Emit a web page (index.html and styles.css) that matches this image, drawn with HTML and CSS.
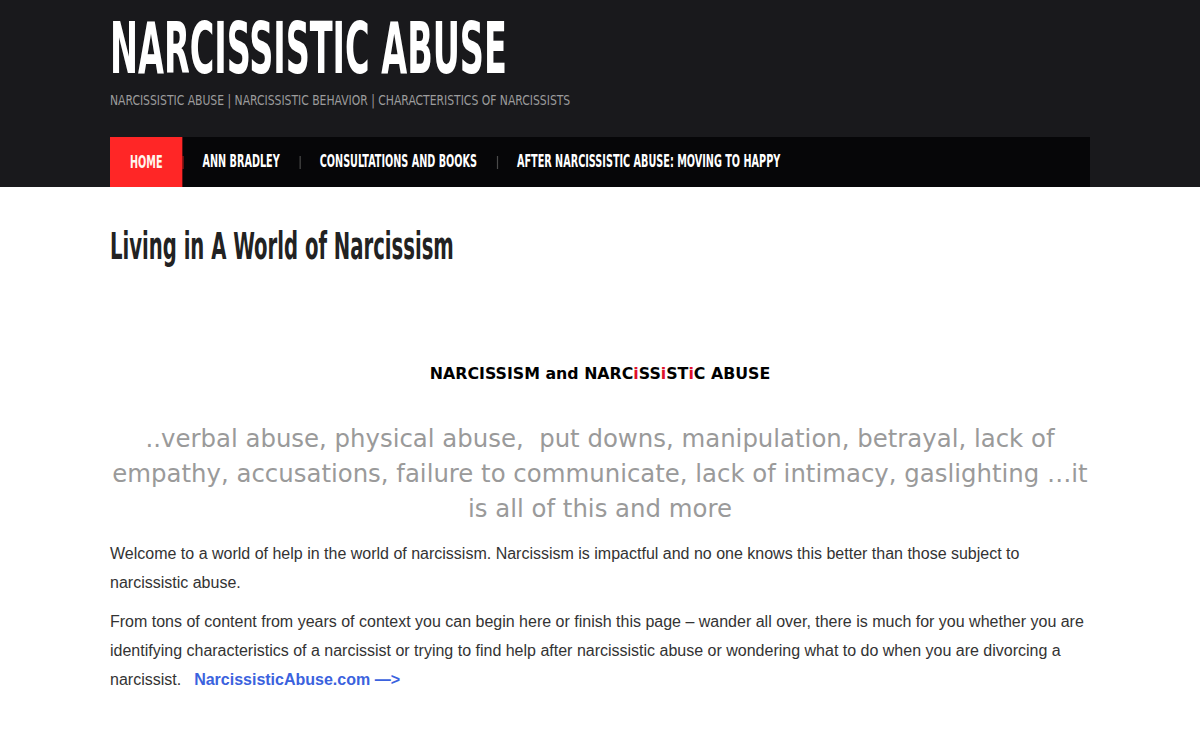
FILE: index.html
```html
<!DOCTYPE html>
<html lang="en">
<head>
<meta charset="utf-8">
<title>Narcissistic Abuse</title>
<link rel="stylesheet" href="styles.css">
</head>
<body>
<header class="site-header">
  <div class="container">
    <div class="branding">
      <h1 class="site-title"><span class="squeeze">NARCISSISTIC ABUSE</span></h1>
      <p class="site-desc"><span class="squeeze">NARCISSISTIC ABUSE | NARCISSISTIC BEHAVIOR | CHARACTERISTICS OF NARCISSISTS</span></p>
    </div>
    <nav class="main-nav">
      <ul class="menu">
        <li class="current"><a href="#">HOME</a></li>
        <li><a href="#">ANN BRADLEY</a></li>
        <li><a href="#">CONSULTATIONS AND BOOKS</a></li>
        <li><a href="#">AFTER NARCISSISTIC ABUSE: MOVING TO HAPPY</a></li>
      </ul>
    </nav>
  </div>
</header>
<main class="container content">
  <h2 class="page-title"><span class="squeeze">Living in A World of Narcissism</span></h2>
  <p class="lead-title">NARCISSISM and NARC<span class="red">i</span>SS<span class="red">i</span>ST<span class="red">i</span>C ABUSE</p>
  <p class="quote">..verbal abuse, physical abuse,&nbsp; put downs, manipulation, betrayal, lack of empathy, accusations, failure to communicate, lack of intimacy, gaslighting …it is all of this and more</p>
  <p class="text">Welcome to a world of help in the world of narcissism. Narcissism is impactful and no one knows this better than those subject to narcissistic abuse.</p>
  <p class="text">From tons of content from years of context you can begin here or finish this page – wander all over, there is much for you whether you are identifying characteristics of a narcissist or trying to find help after narcissistic abuse or wondering what to do when you are divorcing a narcissist.<span class="gap"></span><a class="more" href="#">NarcissisticAbuse.com —&gt;</a></p>
</main>
</body>
</html>
```

FILE: styles.css
```css
html, body {
  margin: 0;
  padding: 0;
  background: #ffffff;
}

body {
  font-family: "Liberation Sans", Arial, sans-serif;
  color: #333333;
}

.container {
  width: 980px;
  margin: 0 auto;
}

.site-header {
  background: #19191c;
  padding-top: 13px;
}

.squeeze {
  display: inline-block;
  transform-origin: left center;
  white-space: nowrap;
}

.site-title {
  margin: 0;
  font-family: "DejaVu Sans Condensed", "DejaVu Sans", sans-serif;
  font-weight: bold;
  font-size: 71px;
  line-height: 71px;
  color: #ffffff;
}

.site-title .squeeze {
  transform: scaleX(0.524);
}

.site-desc {
  margin: 6px 0 0;
  font-family: "DejaVu Sans Condensed", "DejaVu Sans", sans-serif;
  font-size: 14px;
  line-height: 20px;
  color: #9c9c9c;
}

.site-desc .squeeze {
  transform: scaleX(0.858);
}

.main-nav {
  margin-top: 27px;
  height: 50px;
  background: #060608;
}

.menu {
  list-style: none;
  margin: 0;
  padding: 0;
  display: flex;
  transform: scaleX(0.598);
  transform-origin: left center;
  white-space: nowrap;
}

.menu li {
  position: relative;
}

.menu li + li::before {
  content: "";
  position: absolute;
  left: 0;
  top: 19px;
  width: 1.7px;
  height: 13px;
  background: #4a4a4a;
}

.menu li:nth-child(2)::before {
  background: #b01818;
}

.menu a {
  display: block;
  padding: 0 33.4px;
  font-family: "DejaVu Sans Condensed", "DejaVu Sans", sans-serif;
  font-weight: bold;
  font-size: 18px;
  line-height: 48px;
  color: #ffffff;
  text-decoration: none;
}

.menu .current a {
  background: #ff2626;
  color: #fff6ee;
  line-height: 50px;
  height: 50px;
}

.page-title {
  margin: 38px 0 0;
  font-family: "DejaVu Sans Condensed", "DejaVu Sans", sans-serif;
  font-weight: bold;
  font-size: 37px;
  line-height: 44px;
  color: #222222;
}

.page-title .squeeze {
  transform: scaleX(0.59);
}

.lead-title {
  margin: 95px 0 0;
  text-align: center;
  font-family: "DejaVu Sans", Verdana, sans-serif;
  font-weight: bold;
  font-size: 15.8px;
  line-height: 20px;
  color: #000000;
}

.red {
  color: #e0102a;
}

.quote {
  margin: 37px 0 0;
  text-align: center;
  font-family: "DejaVu Sans", Verdana, sans-serif;
  font-size: 24.4px;
  line-height: 35px;
  color: #9a9a9a;
}

.text {
  margin: 13px 0 0;
  font-size: 16px;
  line-height: 29px;
  color: #333333;
}

.text + .text {
  margin-top: 10px;
}

.gap {
  display: inline-block;
  width: 13px;
}

.more {
  font-weight: bold;
  color: #3b62de;
  text-decoration: none;
}
```
